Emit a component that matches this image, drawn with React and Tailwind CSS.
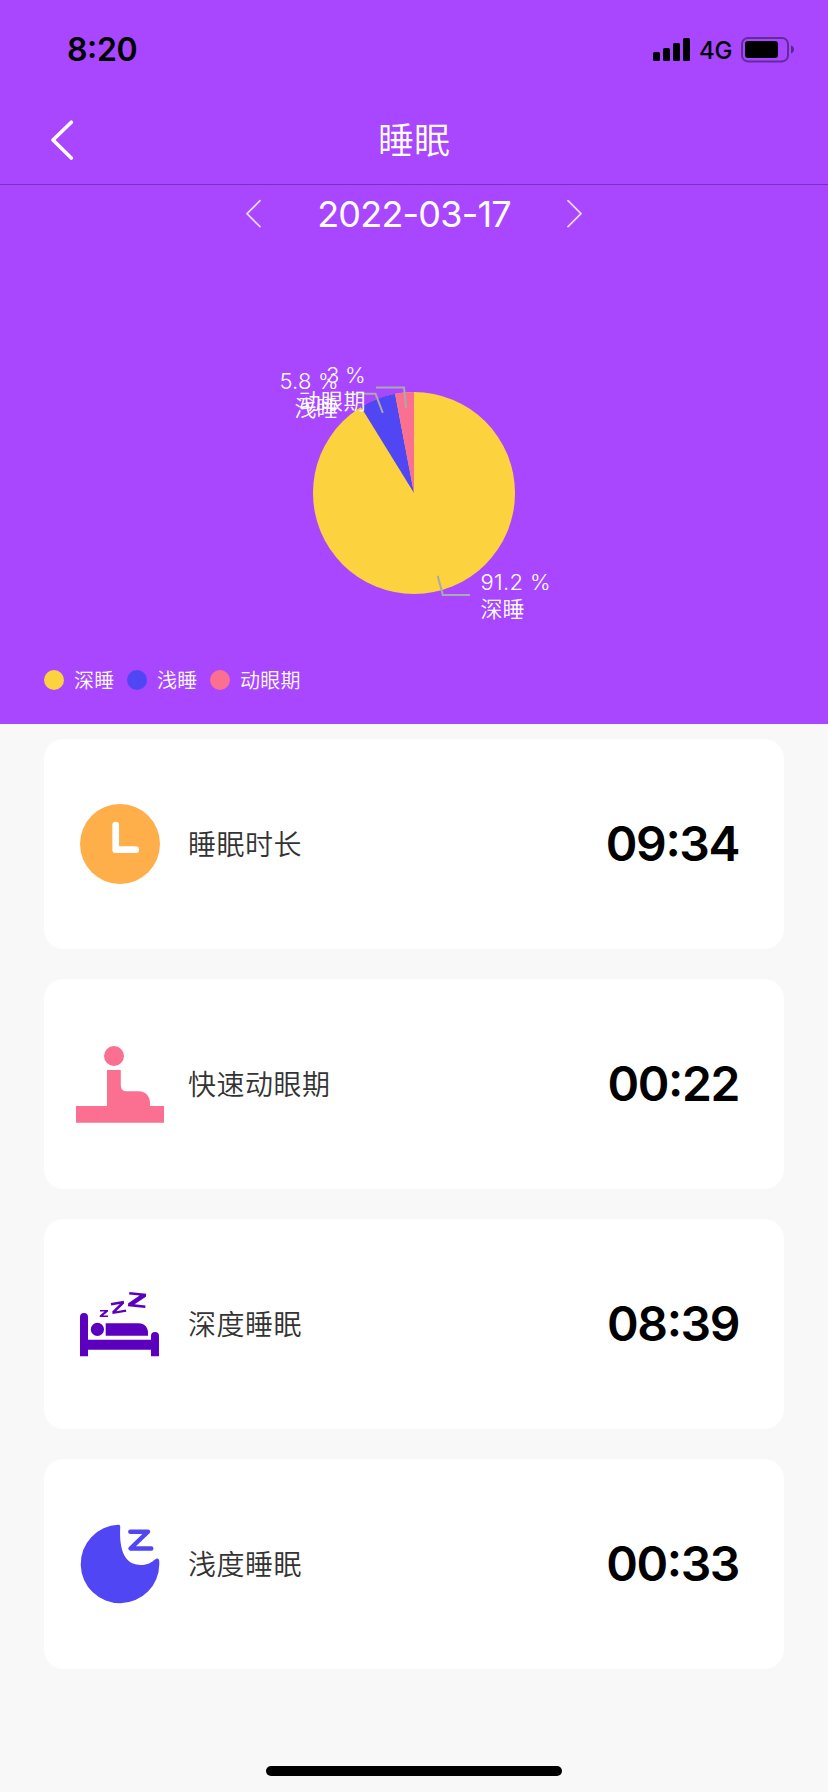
import React from "react";

function StatusBar() {
  return (
    <div className="flex h-[96px] items-center justify-between pt-[4px] pl-[67px] pr-[34px] text-black">
      <span className="text-[32px] leading-none font-semibold tracking-[-0.4px] [font-feature-settings:'case']">8:20</span>
      <div className="flex items-center">
        <svg width="37" height="24" viewBox="0 0 37 24" fill="currentColor">
          <rect x="0" y="14" width="7" height="9" rx="1.5" />
          <rect x="10" y="10" width="7" height="13" rx="1.5" />
          <rect x="20" y="5" width="7" height="18" rx="1.5" />
          <rect x="30" y="0" width="7" height="23" rx="1.5" />
        </svg>
        <span className="ml-[9px] w-[42px] pt-px text-[24px] leading-none font-medium tracking-[-0.3px]">4G</span>
        <svg width="53" height="26" viewBox="0 0 53 26">
          <rect x="1" y="1" width="46" height="23.4" rx="6" fill="none" stroke="#000" strokeOpacity="0.4" strokeWidth="2" />
          <rect x="4" y="4" width="33" height="17" rx="3" />
          <path d="M50 8.500v8c2-.6 3-2.200 3-4s-1-3.400-3-4z" fillOpacity="0.45" />
        </svg>
      </div>
    </div>
  );
}

function NavBar() {
  return (
    <div className="grid h-[89px] grid-cols-3 items-center border-b border-[#7a32b8] text-white">
      <svg className="ml-[50px]" width="24" height="40" viewBox="0 0 24 40" fill="none" stroke="currentColor" strokeWidth="3.6" strokeLinecap="round" strokeLinejoin="round">
        <path d="M21.300 2.200 3 20l18.300 18" />
      </svg>
      <h1 className="pt-[2px] text-center text-[36px] leading-none font-[350]">睡眠</h1>
    </div>
  );
}

function DatePicker() {
  return (
    <div className="flex h-[58px] items-center justify-center text-white">
      <svg width="16" height="30" viewBox="0 0 16 30" fill="none" stroke="currentColor" strokeWidth="1.700" strokeOpacity="0.8" strokeLinecap="round" strokeLinejoin="round">
        <path d="M14 1.700 1 14.700 14 27.700" />
      </svg>
      <span className="w-[304px] text-center text-[36px] leading-none tracking-[-0.8px]">2022-03-17</span>
      <svg width="16" height="30" viewBox="0 0 16 30" fill="none" stroke="currentColor" strokeWidth="1.700" strokeOpacity="0.8" strokeLinecap="round" strokeLinejoin="round">
        <path d="M2 1.700 15 14.700 2 27.700" />
      </svg>
    </div>
  );
}

function PieChart() {
  return (
    <svg className="block" width="828" height="418" viewBox="0 243 828 418">
      <circle cx="414" cy="493" r="101" fill="#fdd23f" />
      <path d="M414 493 360.930 407.070A101 101 0 0 1 395.070 393.790Z" fill="#5046f4" />
      <path d="M414 493 395.070 393.790A101 101 0 0 1 414 392Z" fill="#fb7091" />
      <g fill="none" stroke="#aaaaaa" strokeWidth="2">
        <path d="M437.700 575.700 442.800 595H470" />
        <path d="M382.800 412.800 375.500 393.700H347" />
        <path d="M406 407.800 404 387.400H376" />
      </g>
      <g fill="#fff" fontSize="22" fontWeight="350">
        <text x="480.500" y="590" textLength="70">91.2 %</text>
        <text x="480.500" y="617" textLength="44">深睡</text>
        <text x="279.500" y="389" textLength="59">5.8 %</text>
        <text x="294.500" y="416" textLength="44">浅睡</text>
        <text x="326" y="383" textLength="39.500">3 %</text>
        <text x="298.500" y="409" textLength="67">动眼期</text>
      </g>
    </svg>
  );
}

function LegendItem({ dot, label }) {
  return (
    <li className="flex items-center gap-[10px]">
      <span className={`size-5 rounded-full ${dot}`} />
      <span className="w-[41px] pt-[2px] text-[20px] leading-none font-[350] tracking-[0.3px] whitespace-nowrap">{label}</span>
    </li>
  );
}

function ClockIcon() {
  return (
    <svg width="88" height="88" viewBox="0 0 88 88">
      <circle cx="44" cy="44" r="40" fill="#ffaf49" />
      <path d="M39.700 25.200V49.700H59.700" fill="none" stroke="#fff" strokeWidth="6.700" strokeLinecap="round" strokeLinejoin="round" />
    </svg>
  );
}

function RemIcon() {
  return (
    <svg width="88" height="88" viewBox="0 0 88 88" fill="#fb7091">
      <circle cx="38" cy="16" r="10" />
      <path d="M0 66H31V30H44.800V45.500Q44.800 51.300 50.500 51.300H62.500C70 51.300 74 57 74 63V66H88V82.700H0Z" />
    </svg>
  );
}

function BedIcon() {
  return (
    <svg width="88" height="88" viewBox="0 0 88 88" fill="#5b00bf">
      <path d="M4 76.300V37a4 4 0 0 1 8 0V59.700H75V56a4 4 0 0 1 8 0V76.300H75V69.700H12V76.300Z" />
      <circle cx="21.400" cy="49.400" r="6.600" />
      <path d="M29.700 43.300H62.500C69 43.300 72 48 72 53V55.700H29.700Z" />
      <path d="M24 30H32V31.500L27.200 35.400H32V37H23.800V35.400L28.600 31.600H24Z" />
      <path d="M34.800 23.100 47.800 20.800 48.100 23.500 40.200 31.300 49.900 29.500 50.300 31.700 36.600 34.100 36.200 31.500 43.800 23.900 35.200 25.500Z" />
      <path d="M53.400 12 70.200 13.700 69.900 16.700 58.600 24.300 69.500 25.400 69.200 28 51.900 26.200 52.200 23.300 63.600 15.600 53.100 14.600Z" />
    </svg>
  );
}

function MoonIcon() {
  return (
    <svg width="88" height="88" viewBox="0 0 88 88">
      <path d="M42.300 4.700C43.700 4.700 44.300 5.400 44.200 7C43 31 49 45 65 45C71.500 45 75.500 42.500 79 39.500C81.300 37.600 83.300 38.700 83.300 41.500V44A39.300 39.300 0 1 1 42.300 4.700Z" fill="#5046f4" />
      <path d="M54.300 11.700H72L54.500 28.500H75.300" fill="none" stroke="#5046f4" strokeWidth="4.400" strokeLinecap="round" strokeLinejoin="round" />
    </svg>
  );
}

function StatCard({ icon, label, value }) {
  return (
    <section className="flex h-[210px] items-center rounded-[20px] bg-white pr-[45px] pl-[32px]">
      {icon}
      <span className="ml-[24px] pt-[2px] text-[28px] leading-none font-[350] tracking-[0.5px] text-[#333333]">{label}</span>
      <span className="ml-auto text-[48px] leading-none font-semibold tracking-[-1.400px] text-black [font-feature-settings:'case']">{value}</span>
    </section>
  );
}

export default function App() {
  return (
    <div className="flex h-[1792px] w-[828px] flex-col bg-[#f8f8f8] font-['Inter','Noto_Sans_CJK_SC',sans-serif]">
      <header className="h-[724px] bg-[#a946ff] text-white">
        <StatusBar />
        <NavBar />
        <DatePicker />
        <PieChart />
        <ul className="flex h-[38px] items-center gap-[12px] pl-[44px]">
          <LegendItem dot="bg-[#fdd23f]" label="深睡" />
          <LegendItem dot="bg-[#5046f4]" label="浅睡" />
          <LegendItem dot="bg-[#fb7091]" label="动眼期" />
        </ul>
      </header>
      <main className="flex flex-col gap-[30px] px-[44px] pt-[15px]">
        <StatCard icon={<ClockIcon />} label="睡眠时长" value="09:34" />
        <StatCard icon={<RemIcon />} label="快速动眼期" value="00:22" />
        <StatCard icon={<BedIcon />} label="深度睡眠" value="08:39" />
        <StatCard icon={<MoonIcon />} label="浅度睡眠" value="00:33" />
      </main>
      <footer className="mt-auto flex justify-center pb-[16px]">
        <div className="h-[10px] w-[296px] rounded-full bg-black" />
      </footer>
    </div>
  );
}
